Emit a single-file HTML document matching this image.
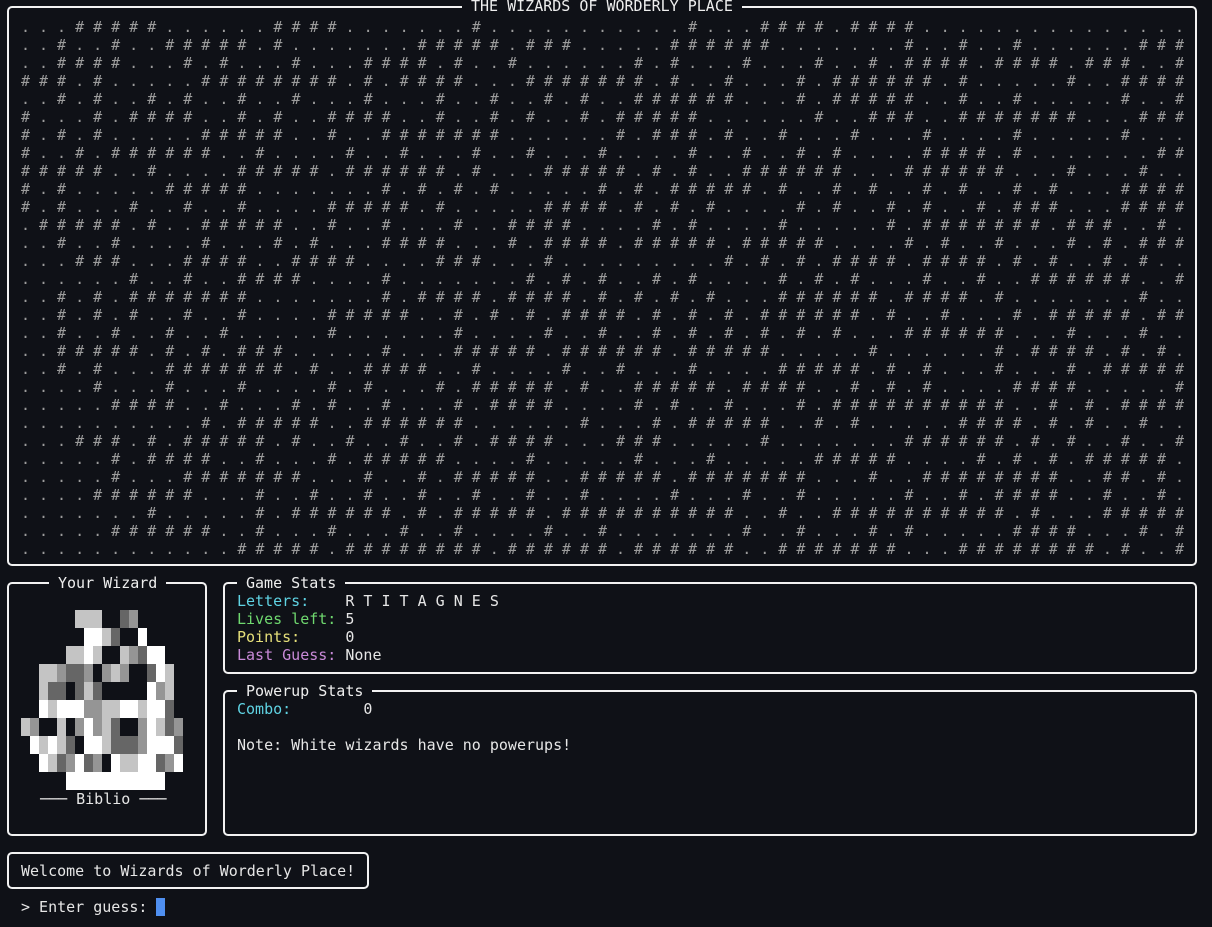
<!DOCTYPE html>
<html><head><meta charset="utf-8"><style>
html,body{margin:0;padding:0;background:#0f1117;width:1212px;height:927px;overflow:hidden}
body{position:relative;font-family:"DejaVu Sans Mono","Liberation Mono",monospace;font-size:15px;color:#e6e6e6}
.box{position:absolute;border:2px solid #f2f2f2;border-radius:5px;box-sizing:border-box}
.lbl{position:absolute;top:-10px;background:#0f1117;padding:0 9px;line-height:18px;white-space:pre;color:#eee}
pre{margin:0;font:inherit;line-height:18px;position:absolute;white-space:pre}
.maze{left:21px;top:18px;color:#9c9c9c;letter-spacing:9.0px}
.c{color:#5fd3e3}.g{color:#6fd86f}.y{color:#e6e07a}.m{color:#c98ad8}
</style></head><body>
<div class="box" style="left:7px;top:6px;width:1190px;height:560px">
<div class="lbl" style="left:453px;top:-11px">THE WIZARDS OF WORDERLY PLACE</div></div>
<pre class="maze">...#####......####.......#...........#...####.####...............
..#..#..#####.#.......#####.###.....######.......#..#..#......###
..####...#.#...#...####.#..#......#.#...#...#..#.####.####.###..#
###.#.....########.#.####...#######.#..#...#.######.#.....#..####
..#.#..#.#..#..#...#...#..#..#.#..######...#.#####..#..#.....#..#
#...#.####..#.#..####..#..#.#..#.#####......#..###..#######...###
#.#.#.....#####..#..#######......#.###.#..#...#...#....#.....#...
#..#.######..#....#..#...#..#...#....#..#..#.#....####.#.......##
#####..#....#####.######.#...#####.#.#..######...######...#...#..
#.#.....#####.......#.#.#.#.....#.#.#####.#..#.#..#.#..#.#...####
#.#...#..#..#....#####.#.....####.#.#.#....#.#..#.#..#.###...####
.#####.#..#####..#..#...#..####....#.#....#.....#.#######.###..#.
..#..#....#...#.#...####...#.####.#####.#####....#.#..#...#.#.###
...###...####..####....###...#.........#.#.#.####.####.#.#..#.#..
......#..#..####....#.......#.#.#..#.#....#.#.#...#..#..######..#
..#.#.#######.......#.####.####.#.#.#.#...######.####.#.......#..
..#.#.#..#..#....#####..#.#.#.####.#.#.#.######.#..#...#.#####.##
..#..#..#..#.....#......#....#..#..#.#.#.#.#.#...######...#...#..
..#####.#.#.###.....#...#####.######.#####.....#......#.####.#.#.
..#.#...#######.#..####..#....#..#...#....#####.#.#...#...#.#####
....#...#...#....#.#...#.#####.#..#####.####..#.#.#....####.....#
.....####..#...#.#..#...#.####....#.#..#...#.##########..#.#.####
..........#.#####..######......#...#.#####..#.#.....####.#.#..#..
...###.#.#####.#..#..#..#.####...###.....#.......######.#.#..#..#
.....#.####..#...#.#####....#.....#...#.....#####....#.#.#.#####.
.....#...#######...#..#.#####..#####.#######...#..########..##.#.
....######...#..#..#..#..#..#..#....#...#..#.....#..#.####..#..#.
.......#.....#.######.#.#####.##########..#..##########.#...#####
.....######..#...#...#..#....#..#.......#..#...#.#.....####...#.#
............#####.########.######.######..#######...########.#..#</pre>

<div class="box" style="left:7px;top:582px;width:200px;height:254px">
<div class="lbl" style="left:40px">Your Wizard</div></div>
<svg style="position:absolute;left:21px;top:610px" width="171" height="180">
<g fill="#fff">
<rect x="63" y="18" width="18" height="18"/><rect x="117" y="18" width="9" height="18"/>
<rect x="63" y="36" width="9" height="18"/><rect x="126" y="36" width="18" height="18"/>
<rect x="135" y="54" width="9" height="18"/>
<rect x="126" y="72" width="9" height="18"/>
<rect x="18" y="90" width="9" height="18"/><rect x="36" y="90" width="27" height="18"/><rect x="99" y="90" width="18" height="18"/><rect x="126" y="90" width="18" height="18"/>
<rect x="63" y="108" width="9" height="18"/><rect x="126" y="108" width="9" height="18"/>
<rect x="9" y="126" width="9" height="18"/><rect x="27" y="126" width="9" height="18"/><rect x="63" y="126" width="18" height="18"/><rect x="126" y="126" width="27" height="18"/>
<rect x="18" y="144" width="9" height="18"/><rect x="54" y="144" width="9" height="18"/><rect x="90" y="144" width="9" height="18"/><rect x="117" y="144" width="18" height="18"/><rect x="153" y="144" width="9" height="18"/>
<rect x="45" y="162" width="99" height="18"/>
</g>
<g fill="#c4c4c4">
<rect x="54" y="0" width="27" height="18"/><rect x="81" y="18" width="9" height="18"/>
<rect x="45" y="36" width="18" height="18"/><rect x="72" y="36" width="9" height="18"/><rect x="99" y="36" width="9" height="18"/>
<rect x="18" y="54" width="18" height="18"/><rect x="90" y="54" width="9" height="18"/><rect x="144" y="54" width="9" height="18"/>
<rect x="18" y="72" width="9" height="18"/><rect x="63" y="72" width="9" height="18"/><rect x="144" y="72" width="9" height="18"/>
<rect x="27" y="90" width="9" height="18"/><rect x="81" y="90" width="18" height="18"/><rect x="117" y="90" width="9" height="18"/>
<rect x="0" y="108" width="9" height="18"/><rect x="36" y="108" width="9" height="18"/><rect x="81" y="108" width="9" height="18"/><rect x="135" y="108" width="9" height="18"/>
<rect x="18" y="126" width="9" height="18"/><rect x="36" y="126" width="9" height="18"/><rect x="81" y="126" width="9" height="18"/>
<rect x="27" y="144" width="9" height="18"/><rect x="99" y="144" width="18" height="18"/>
</g>
<g fill="#959595">
<rect x="108" y="0" width="9" height="18"/><rect x="108" y="36" width="9" height="18"/>
<rect x="36" y="54" width="9" height="18"/><rect x="63" y="54" width="9" height="18"/><rect x="81" y="54" width="9" height="18"/><rect x="99" y="54" width="9" height="18"/>
<rect x="135" y="72" width="9" height="18"/><rect x="63" y="90" width="18" height="18"/>
<rect x="9" y="108" width="9" height="18"/><rect x="54" y="108" width="9" height="18"/><rect x="72" y="108" width="9" height="18"/><rect x="117" y="108" width="9" height="18"/><rect x="153" y="108" width="9" height="18"/>
<rect x="117" y="126" width="9" height="18"/>
<rect x="45" y="144" width="9" height="18"/><rect x="72" y="144" width="9" height="18"/><rect x="144" y="144" width="9" height="18"/>
</g>
<g fill="#666">
<rect x="99" y="0" width="9" height="18"/><rect x="90" y="18" width="9" height="18"/><rect x="117" y="36" width="9" height="18"/>
<rect x="45" y="54" width="18" height="18"/><rect x="126" y="54" width="9" height="18"/>
<rect x="27" y="72" width="18" height="18"/><rect x="54" y="72" width="9" height="18"/><rect x="72" y="72" width="9" height="18"/>
<rect x="144" y="90" width="9" height="18"/>
<rect x="90" y="108" width="9" height="18"/><rect x="144" y="108" width="9" height="18"/>
<rect x="45" y="126" width="9" height="18"/><rect x="90" y="126" width="27" height="18"/><rect x="153" y="126" width="9" height="18"/>
<rect x="36" y="144" width="9" height="18"/><rect x="63" y="144" width="9" height="18"/><rect x="135" y="144" width="9" height="18"/>
</g>
</svg>
<pre style="left:40px;top:790px">─── Biblio ───</pre>

<div class="box" style="left:223px;top:582px;width:974px;height:92px">
<div class="lbl" style="left:12px">Game Stats</div></div>
<pre style="left:237px;top:592px"><span class="c">Letters:</span>    R T I T A G N E S
<span class="g">Lives left:</span> 5
<span class="y">Points:</span>     0
<span class="m">Last Guess:</span> None</pre>

<div class="box" style="left:223px;top:690px;width:974px;height:146px">
<div class="lbl" style="left:12px">Powerup Stats</div></div>
<pre style="left:237px;top:700px"><span class="c">Combo:</span>        0

Note: White wizards have no powerups!</pre>

<div class="box" style="left:7px;top:852px;width:362px;height:37px"></div>
<pre style="left:21px;top:862px">Welcome to Wizards of Worderly Place!</pre>
<pre style="left:21px;top:898px">&gt; Enter guess: </pre>
<div style="position:absolute;left:156px;top:898px;width:9px;height:18px;background:#4f8ff0"></div>
</body></html>
